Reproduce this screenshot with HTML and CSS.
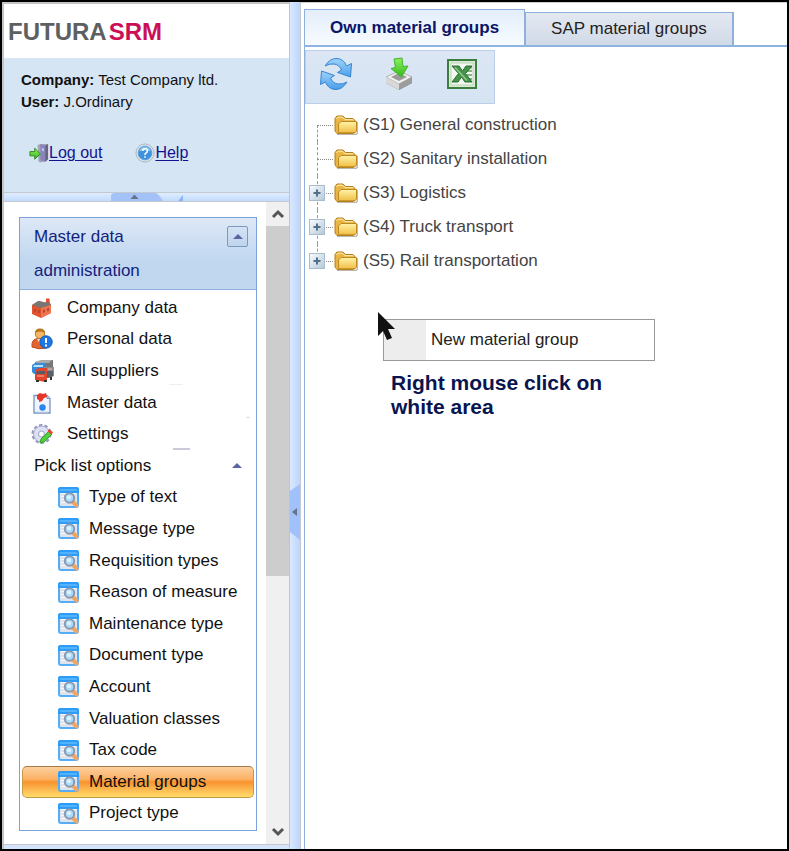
FILE: index.html
```html
<!DOCTYPE html>
<html lang="en">
<head>
    <meta charset="UTF-8">
    <meta name="viewport" content="width=device-width, initial-scale=1.0">
    <title>FUTURA SRM - Material groups</title>
    <link rel="stylesheet" href="styles.css">
</head>
<body>
    <!-- Shared icons -->
    <svg class="sprite" aria-hidden="true">
        <defs>
            <linearGradient id="gFolder" x1="0" y1="0" x2="0" y2="1">
                <stop offset="0" stop-color="#fff3a8"/>
                <stop offset="1" stop-color="#f0bf45"/>
            </linearGradient>
            <linearGradient id="gBlue" x1="0" y1="0" x2="0" y2="1">
                <stop offset="0" stop-color="#9fd4fb"/>
                <stop offset="1" stop-color="#4a9eea"/>
            </linearGradient>
            <linearGradient id="gGreen" x1="0" y1="0" x2="0" y2="1">
                <stop offset="0" stop-color="#8ff060"/>
                <stop offset="1" stop-color="#35b81d"/>
            </linearGradient>
            <linearGradient id="gBox" x1="0" y1="0" x2="1" y2="1">
                <stop offset="0" stop-color="#fafdff"/>
                <stop offset="1" stop-color="#b4c8d8"/>
            </linearGradient>
        </defs>
        <symbol id="icon-folder" viewBox="0 0 24 20">
            <path d="M3 19.500h19l1.500-1.500V7" fill="none" stroke="#8d8878" stroke-width="1.500" opacity=".6"/>
            <path d="M1 16V3.500L3 1h6l2.500 2.500H19l2 2V17l-2 1.500H3z" fill="#e9b545" stroke="#b27f1b"/>
            <path d="M2.500 4 4 2.200h4.500L11 4.700h8" fill="none" stroke="#fff0b5"/>
            <path d="M4.500 17.500V9L7 6.500h15.500V16L21 17.800H4.500z" fill="url(#gFolder)" stroke="#bd8a22"/>
        </symbol>
        <symbol id="icon-plus" viewBox="0 0 16 16">
            <rect x=".5" y=".5" width="15" height="15" fill="url(#gBox)" stroke="#a9bccb"/>
            <path d="M8 4.500v7M4.500 8h7" stroke="#526f8b" stroke-width="2"/>
        </symbol>
        <symbol id="icon-picklist" viewBox="0 0 21 21">
            <rect x="1" y="1" width="19" height="19" rx="2" fill="#dfe4ec" stroke="#55adf7" stroke-width="2"/>
            <path d="M0 6V2.500Q0 0 2.500 0h16Q21 0 21 2.500V6z" fill="#2b9cf9"/>
            <path d="M2 3h17" stroke="#63b9fd" stroke-width="1.500"/>
            <path d="M3 6.500h15" stroke="#f6f9fc"/>
            <path d="M3 9.500h4M3 12.500h4M3 15.500h5" stroke="#f5f7fa"/>
            <path d="m15 15 3.500 3.500" stroke="#f2a563" stroke-width="4" stroke-linecap="round"/>
            <circle cx="11.500" cy="11" r="4.700" fill="#a8dcff" stroke="#8d98ab" stroke-width="2"/>
            <circle cx="11" cy="10.300" r="2" fill="#dcf3ff"/>
        </symbol>
    </svg>

    <div class="app">
        <aside class="sidebar">
            <header class="logo"><span class="logo-name">FUTURA</span><span class="logo-product">SRM</span></header>

            <section class="user-info">
                <p><b>Company:</b> Test Company ltd.</p>
                <p><b>User:</b> J.Ordinary</p>
                <div class="user-links">
                    <a href="#logout">
                        <svg class="icon-link" viewBox="0 0 21 21" aria-hidden="true">
                            <path d="m9 2 3-1h8v16l-3 2-5 1.500-2-1z" fill="#a4a4b4"/>
                            <path d="m12 1 5 2v17l-5-2z" fill="#8784bd"/>
                            <path d="M17 3l3-2v16l-3 3z" fill="#66667c"/>
                            <path d="m13.500 5 2 1v3l-2-1z" fill="#c9cbee"/>
                            <path d="M1 9h5V5.500l6 6-6 5.500v-3.500H1z" fill="url(#gGreen)" stroke="#31831f"/>
                        </svg><span>Log out</span>
                    </a>
                    <a href="#help">
                        <svg class="icon-link" viewBox="0 0 21 21" aria-hidden="true">
                            <circle cx="10.500" cy="10.500" r="9.500" fill="#dbe4ea" stroke="#a9b5bf"/>
                            <circle cx="10.500" cy="10.500" r="7.200" fill="#3d91dd" stroke="#5a9dd6"/>
                            <path d="M4.500 9q1-5 6-5t6 5q-6-3-12 0z" fill="#8cc5f4"/>
                            <path d="M8 8.500q0-2.500 2.500-2.500T13 8.300q0 1.500-1.500 2.200-1 .5-1 2M10.500 14v1.500" fill="none" stroke="#fff" stroke-width="1.700"/>
                        </svg><span>Help</span>
                    </a>
                </div>
            </section>

            <div class="split-horizontal">
                <svg class="split-up" viewBox="0 0 72 8" aria-hidden="true">
                    <path d="M0 8V2q1-2 4-2h40q3 0 8 8z" fill="#a3c2f8"/>
                    <path d="M72 2v6h-5z" fill="#8db4f4"/>
                    <path d="m23.500 1.500 4 4.500h-8z" fill="#697386"/>
                </svg>
            </div>

            <div class="menu-area">
                <nav class="menu">
                    <div class="menu-header">
                        <h2>Master data administration</h2>
                        <button type="button" class="btn-collapse" aria-label="Collapse menu"></button>
                    </div>
                    <ul class="menu-list">
                        <li><a href="#company">
                            <svg class="icon-menu" viewBox="0 0 22 22" aria-hidden="true">
                                <path d="M15 9V1.500h3.500L19 9z" fill="#e64d2c"/>
                                <path d="m1 8 7-4 12 3v9l-10 5-9-4z" fill="#e0532f"/>
                                <path d="m1 8 6-4 5 1 7 1 1 2-10 3z" fill="#777"/>
                                <path d="m10 11 10-3v8l-10 5z" fill="#f07450"/>
                                <path d="m3 12 2 .600v2.400l-2-.600zm4 1 2 .600v2.400L7 15.400zM12 13l2-.700v3l-2 .700zm4-1.500 2-.700v3l-2 .700z" fill="#b5472e"/>
                            </svg><span>Company data</span></a></li>
                        <li class="smudge-light"><a href="#personal">
                            <svg class="icon-menu" viewBox="0 0 22 22" aria-hidden="true">
                                <path d="M1 19q-1-8 6-8.500h3q5 1 5 9.500-7 2-14-1z" fill="#e5652d" stroke="#b84a1d"/>
                                <path d="m6 11 3 5 3-5z" fill="#ffe2bd"/>
                                <circle cx="9" cy="6" r="4.700" fill="#f5b765" stroke="#b87a2b"/>
                                <path d="M4 5q0-4.500 5-4.500T14 5q-5-3-10 0z" fill="#b8781b"/>
                                <circle cx="15" cy="14" r="6.200" fill="#1c78e8" stroke="#1258b7"/>
                                <path d="M15 10v5M15 16.500v2" stroke="#fff" stroke-width="2"/>
                            </svg><span>Personal data</span></a></li>
                        <li><a href="#suppliers">
                            <svg class="icon-menu icon-suppliers" viewBox="0 0 24 24" aria-hidden="true">
                                <path d="m4 3 8-2h10v7l-8 3H4z" fill="#777"/>
                                <path d="m6 2 6-1h9l-3 3H5z" fill="#aaa"/>
                                <path d="m1 6 3-2h10v11H3l-2-2z" fill="#348cdb"/>
                                <path d="M3 6h9v2H2z" fill="#b8e1ff"/>
                                <path d="M13 8h10v9l-4 2h-6z" fill="#888e94"/>
                                <path d="m4 11 4-2h8v12l-2 2-10-2z" fill="#e1452c"/>
                                <path d="M6 12h8v3H5z" fill="#575d65"/>
                                <path d="M16 12h6v5l-6 2z" fill="#5b6066"/>
                                <path d="M6 17h7M17 10h4" stroke="#ffb2a3"/>
                                <path d="M5 21h3v2H5zm8 0h3v2h-3zm6-3h2v3h-2z" fill="#333"/>
                            </svg><span>All suppliers</span></a></li>
                        <li class="smudge-edge"><a href="#master">
                            <svg class="icon-menu" viewBox="0 0 22 22" aria-hidden="true">
                                <path d="M3 3.500h13l3 3V21H3z" fill="#eff4fc" stroke="#7994c0" stroke-width="1.300"/>
                                <path d="M16 3.500v3h3" fill="#c8d8f0" stroke="#7994c0"/>
                                <path d="m6 3 3-2 3 1 3-1 1 4-3 1-2 3-3 1V8L6 7z" fill="#e73526"/>
                                <circle cx="11.500" cy="15.500" r="3.200" fill="#2886ec"/>
                                <path d="M5 20h12" stroke="#cbd7e7"/>
                            </svg><span>Master data</span></a></li>
                        <li class="smudge-line"><a href="#settings">
                            <svg class="icon-menu" viewBox="0 0 22 22" aria-hidden="true">
                                <circle cx="10.500" cy="11" r="8.500" fill="none" stroke="#9497bd" stroke-width="3" stroke-dasharray="3.200 2.140"/>
                                <circle cx="10.500" cy="11" r="5.500" fill="#fff" stroke="#dddff2" stroke-width="5"/>
                                <circle cx="10.500" cy="11" r="8" fill="none" stroke="#a8abcd"/>
                                <circle cx="10.500" cy="11" r="3" fill="#fff" stroke="#9c9fc4"/>
                                <path d="m9 20 1-4 8-8 3 3-8 8z" fill="#52cf3c" stroke="#37a328"/>
                                <path d="m16.500 8 2-2 3.500 3.500-2 2z" fill="#ea4334"/>
                            </svg><span>Settings</span></a></li>
                        <li class="menu-group">
                            <button type="button" aria-expanded="true">Pick list options</button>
                        </li>
                        <li class="sub"><a href="#text"><svg class="icon-pick" aria-hidden="true"><use href="#icon-picklist"/></svg><span>Type of text</span></a></li>
                        <li class="sub"><a href="#message"><svg class="icon-pick" aria-hidden="true"><use href="#icon-picklist"/></svg><span>Message type</span></a></li>
                        <li class="sub"><a href="#requisition"><svg class="icon-pick" aria-hidden="true"><use href="#icon-picklist"/></svg><span>Requisition types</span></a></li>
                        <li class="sub"><a href="#reason"><svg class="icon-pick" aria-hidden="true"><use href="#icon-picklist"/></svg><span>Reason of measure</span></a></li>
                        <li class="sub"><a href="#maintenance"><svg class="icon-pick" aria-hidden="true"><use href="#icon-picklist"/></svg><span>Maintenance type</span></a></li>
                        <li class="sub"><a href="#document"><svg class="icon-pick" aria-hidden="true"><use href="#icon-picklist"/></svg><span>Document type</span></a></li>
                        <li class="sub"><a href="#account"><svg class="icon-pick" aria-hidden="true"><use href="#icon-picklist"/></svg><span>Account</span></a></li>
                        <li class="sub"><a href="#valuation"><svg class="icon-pick" aria-hidden="true"><use href="#icon-picklist"/></svg><span>Valuation classes</span></a></li>
                        <li class="sub"><a href="#tax"><svg class="icon-pick" aria-hidden="true"><use href="#icon-picklist"/></svg><span>Tax code</span></a></li>
                        <li class="sub active"><a href="#material" aria-current="page"><svg class="icon-pick" aria-hidden="true"><use href="#icon-picklist"/></svg><span>Material groups</span></a></li>
                        <li class="sub"><a href="#project"><svg class="icon-pick" aria-hidden="true"><use href="#icon-picklist"/></svg><span>Project type</span></a></li>
                    </ul>
                </nav>

                <div class="scrollbar">
                    <button type="button" class="scroll-btn" aria-label="Scroll up">
                        <svg viewBox="0 0 14 10" aria-hidden="true"><path d="m2 8 5-5 5 5" fill="none" stroke="#555" stroke-width="3"/></svg>
                    </button>
                    <div class="scroll-track"><div class="scroll-thumb"></div></div>
                    <button type="button" class="scroll-btn" aria-label="Scroll down">
                        <svg viewBox="0 0 14 10" aria-hidden="true"><path d="m2 2 5 5 5-5" fill="none" stroke="#555" stroke-width="3"/></svg>
                    </button>
                </div>
            </div>
            <div class="sidebar-footer"></div>
        </aside>

        <div class="split-vertical">
            <svg class="split-left" viewBox="0 0 10 56" aria-hidden="true">
                <path d="M10 0v56L0 48V7z" fill="#a1c1fb"/>
                <path d="M7 24v8l-5-4z" fill="#697386"/>
            </svg>
        </div>

        <main class="content">
            <div class="tabs" role="tablist">
                <button type="button" class="tab active" role="tab" aria-selected="true">Own material groups</button>
                <button type="button" class="tab" role="tab" aria-selected="false">SAP material groups</button>
            </div>

            <div class="panel">
                <div class="toolbar">
                    <button type="button" aria-label="Refresh">
                        <svg viewBox="0 0 34 34" aria-hidden="true">
                            <path d="M6 9Q11 1 18 1.500 25 2 27.500 9L32.500 6.500 31.500 20 18.500 15.500 22.500 13Q20 7.500 15 7 10 6.500 6 9z" fill="url(#gBlue)" stroke="#3585d3"/>
                            <path d="M28 25Q23 33 16 32.500 9 32 6.500 25L1.500 27.500 2.500 14 15.500 18.500 11.500 21Q14 26.500 19 27 24 27.500 28 25z" fill="url(#gBlue)" stroke="#3585d3"/>
                        </svg>
                    </button>
                    <button type="button" aria-label="Download">
                        <svg viewBox="0 0 34 34" aria-hidden="true">
                            <path d="m4 20 13-6 13 6v6l-13 7L4 26z" fill="#777"/>
                            <path d="m4 20 13-6 13 6-13 7z" fill="#f0f0f0" stroke="#b6b6b6"/>
                            <path d="m9 20 8-4 8 4-8 4z" fill="#9b9b9b"/>
                            <path d="m4 20 13 7v6L4 26z" fill="#d8d8d8"/>
                            <path d="m17 27 13-7v6l-13 7z" fill="#9c9c9c"/>
                            <path d="m12 2 8-1 1 8.500 5-.5-6.500 11L9 11.500l4.500-1z" fill="url(#gGreen)" stroke="#3fb52c"/>
                        </svg>
                    </button>
                    <button type="button" aria-label="Export to Excel">
                        <svg viewBox="0 0 34 34" aria-hidden="true">
                            <rect x="3" y="3" width="28" height="28" fill="#dcebd6" stroke="#3b7f40" stroke-width="2"/>
                            <rect x="6" y="6" width="22" height="22" fill="#f3f8f0" stroke="#bcd6b6"/>
                            <path d="M21 10.500h6M22 14h5M22 18h5M21 22h6" stroke="#8bb587" stroke-width="2"/>
                            <path d="M7 9h7l3.500 5L21 9h6l-6.500 7.500L27 25h-7l-3.500-5-3.500 5H7l6.500-8.500z" fill="#449449" stroke="#2b6e32"/>
                            <path d="m10 10.500 12 13" stroke="#8fc98b" stroke-width="1.500"/>
                        </svg>
                    </button>
                </div>

                <ul class="tree">
                    <li><span class="branch"></span><svg class="icon-folder" aria-hidden="true"><use href="#icon-folder"/></svg><span>(S1) General construction</span></li>
                    <li><span class="branch"></span><svg class="icon-folder" aria-hidden="true"><use href="#icon-folder"/></svg><span>(S2) Sanitary installation</span></li>
                    <li><span class="branch"><button type="button" aria-label="Expand Logistics"><svg aria-hidden="true"><use href="#icon-plus"/></svg></button></span><svg class="icon-folder" aria-hidden="true"><use href="#icon-folder"/></svg><span>(S3) Logistics</span></li>
                    <li><span class="branch"><button type="button" aria-label="Expand Truck transport"><svg aria-hidden="true"><use href="#icon-plus"/></svg></button></span><svg class="icon-folder" aria-hidden="true"><use href="#icon-folder"/></svg><span>(S4) Truck transport</span></li>
                    <li><span class="branch"><button type="button" aria-label="Expand Rail transportation"><svg aria-hidden="true"><use href="#icon-plus"/></svg></button></span><svg class="icon-folder" aria-hidden="true"><use href="#icon-folder"/></svg><span>(S5) Rail transportation</span></li>
                </ul>

                <div class="context">
                    <div class="context-menu" role="menu">
                        <button type="button" role="menuitem">New material group</button>
                    </div>
                    <svg class="cursor" viewBox="0 0 20 31" aria-hidden="true">
                        <path d="M1 1v24l5-5 4 9 5-2-4-9h7z" fill="#111"/>
                    </svg>
                    <p class="hint">Right mouse click on white area</p>
                </div>
            </div>
        </main>
    </div>
</body>
</html>
```
FILE: styles.css
```css
* {
    margin: 0;
    padding: 0;
    box-sizing: border-box;
}

body {
    font-family: "Liberation Sans", Arial, sans-serif;
    font-size: 17px;
    color: #222;
    background-color: #fff;
}

button {
    font: inherit;
    color: inherit;
    background: none;
    border: none;
    cursor: pointer;
}

ul {
    list-style: none;
}

svg {
    display: block;
    flex-shrink: 0;
}

.sprite {
    position: absolute;
    width: 0;
    height: 0;
}

.app {
    display: flex;
    min-height: 100vh;
    border: 2px solid #000;
}

/* Sidebar */
.sidebar {
    display: flex;
    flex-direction: column;
    width: 288px;
    flex-shrink: 0;
    border: solid #c4c4c4;
    border-width: 2px 1px 0 2px;
}

.logo {
    height: 54px;
    line-height: 56px;
    padding-left: 4px;
    font-size: 24px;
    font-weight: bold;
}

.logo-name {
    color: #5d6063;
}

.logo-product {
    margin-left: 2px;
    color: #cb0f57;
}

.user-info {
    height: 134px;
    padding: 11px 17px;
    font-size: 15px;
    line-height: 22px;
    color: #111;
    background-color: #d6e5f4;
}

.user-links {
    display: flex;
    gap: 33px;
    margin-top: 29px;
    padding-left: 8px;
    font-size: 16px;
}

.user-links a {
    display: flex;
    align-items: center;
    color: #12128f;
    text-decoration: none;
}

.user-links span {
    text-decoration: underline;
    text-underline-offset: 2px;
}

.icon-link {
    width: 20px;
    height: 20px;
}

.split-horizontal {
    height: 10px;
    border: solid #c4c8cf;
    border-width: 1px 0;
    background: linear-gradient(#dfecff, #c3dcfd);
}

.split-up {
    width: 72px;
    height: 8px;
    margin-left: 107px;
}

.menu-area {
    display: flex;
    flex: 1;
}

.menu {
    display: flex;
    flex-direction: column;
    flex: 1;
    margin: 15px 9px 13px 15px;
    border: 1px solid #7ba3d9;
}

.menu-header {
    display: flex;
    justify-content: space-between;
    align-items: flex-start;
    padding: 2px 8px 1px 14px;
    border-bottom: 1px solid #8eb2df;
    background: linear-gradient(#dde8f6, #c1d7f0 60%);
}

.menu-header h2 {
    width: 140px;
    font-size: 17px;
    font-weight: normal;
    line-height: 34px;
    color: #12227c;
}

.btn-collapse {
    display: flex;
    align-items: center;
    justify-content: center;
    width: 21px;
    height: 21px;
    margin-top: 6px;
    border: 1px solid #7d99bd;
    border-radius: 2px;
    background: linear-gradient(#d4e3f5, #bfd4ec);
}

.btn-collapse::before,
.menu-group button::after {
    content: "";
    border: 5px solid transparent;
    border-top: none;
    border-bottom: 5px solid #5a66a0;
}

.menu-list {
    display: flex;
    flex-direction: column;
    flex: 1;
    padding: 2px 2px 1px;
}

.menu-list li {
    display: flex;
    flex: 1;
    position: relative;
    min-height: 30px;
}

.menu-list a,
.menu-list button {
    display: flex;
    align-items: center;
    flex: 1;
    gap: 14px;
    padding-left: 9px;
    color: #111;
    text-decoration: none;
}

.icon-menu {
    width: 22px;
    height: 22px;
}

.icon-suppliers {
    width: 24px;
    height: 24px;
    margin-right: -2px;
}

.menu-list .menu-group button {
    justify-content: space-between;
    padding: 0 12px;
}

.menu-list .sub a {
    gap: 10px;
    padding-left: 36px;
}

.icon-pick {
    width: 21px;
    height: 21px;
}

.menu-list .active a {
    padding-left: 35px;
    border: 1px solid #c49a45;
    border-top-color: #a37a49;
    border-radius: 5px;
    background: linear-gradient(#fbcf9c, #fcb266 40%, #f8932c 50%, #fcb24c 70%, #ffdc6b);
}

.smudge-light::after,
.smudge-edge::after,
.smudge-line::after {
    content: "";
    position: absolute;
    right: 64px;
    bottom: 0;
    width: 17px;
    height: 2px;
    background-color: #ccc9df;
}

.smudge-light::after {
    right: 71px;
    bottom: -30px;
    width: 14px;
    height: 1px;
    background-color: #eee;
}

.smudge-edge::after {
    right: 4px;
    width: 4px;
    height: 1px;
    background-color: #ddd;
}

.scrollbar {
    display: flex;
    flex-direction: column;
    width: 23px;
    background-color: #f0f0f0;
}

.scroll-btn {
    display: flex;
    align-items: center;
    justify-content: center;
    height: 24px;
}

.scroll-btn svg {
    width: 14px;
    height: 10px;
}

.scroll-track {
    flex: 1;
}

.scroll-thumb {
    height: 59%;
    background-color: #cdcdcd;
}

.sidebar-footer {
    height: 5px;
    border-top: 1px solid #c4c8cf;
    background-color: #d3e4fc;
}

.split-vertical {
    display: flex;
    align-items: center;
    width: 11px;
    flex-shrink: 0;
    padding-top: 172px;
    border-right: 1px solid #c4c8cf;
    background: linear-gradient(to right, #dbe8fe, #bcd6fd);
}

.split-left {
    width: 10px;
    height: 56px;
}

/* Content */
.content {
    display: flex;
    flex-direction: column;
    flex: 1;
    min-width: 0;
    padding: 6px 0 0 3px;
    border-top: 1px solid #ccc;
}

.tabs {
    display: flex;
    align-items: flex-end;
    border-bottom: 2px solid #8fb3e0;
}

.tab {
    height: 33px;
    padding: 0 25px;
    border: solid #8fb0dc;
    border-width: 1px 2px 0 1px;
    color: #222;
    background: linear-gradient(#e4e9f1, #d0dae8);
}

.tab.active {
    height: 36px;
    border-width: 1px 1px 0;
    font-weight: bold;
    color: #0b1668;
    background: linear-gradient(#e3eefb, #f7fbff);
}

.panel {
    flex: 1;
    padding-top: 3px;
    border-left: 1px solid #8fb0dc;
}

.toolbar {
    display: flex;
    gap: 29px;
    width: 190px;
    height: 54px;
    padding: 6px 13px;
    border: 1px solid #bdcfe8;
    background: linear-gradient(#dce6f4, #d5e4f3);
}

.toolbar button,
.toolbar svg {
    width: 34px;
    height: 34px;
}

.tree {
    margin-top: 4px;
    padding-left: 4px;
    color: #444;
}

.tree li {
    display: flex;
    align-items: center;
    height: 34px;
}

.icon-folder {
    width: 24px;
    height: 20px;
    margin-right: 5px;
}

/* dotted connector lines */
.branch {
    display: flex;
    align-items: center;
    align-self: stretch;
    position: relative;
    width: 25px;
}

.branch::before {
    content: "";
    position: absolute;
    top: 0;
    bottom: 0;
    left: 8px;
    border-left: 1px dashed #999;
}

.branch::after {
    content: "";
    position: absolute;
    top: 50%;
    left: 8px;
    right: 1px;
    border-top: 1px dotted #888;
}

.tree li:first-child .branch::before {
    top: 50%;
}

.tree li:last-child .branch::before {
    bottom: 50%;
}

.branch button,
.branch svg {
    position: relative;
    z-index: 1;
    width: 16px;
    height: 16px;
}

.context {
    position: relative;
    width: 272px;
    margin: 41px 0 0 78px;
}

.context-menu {
    border: 1px solid #999;
    background: linear-gradient(to right, #ededed 42px, #fff 42px);
}

.context-menu button {
    width: 100%;
    height: 40px;
    padding-left: 47px;
    text-align: left;
}

.cursor {
    position: absolute;
    top: -8px;
    left: -6px;
    width: 20px;
    height: 31px;
}

.hint {
    width: 240px;
    margin: 10px 0 0 8px;
    font-size: 21px;
    font-weight: bold;
    line-height: 24px;
    color: #0a1550;
}
```
